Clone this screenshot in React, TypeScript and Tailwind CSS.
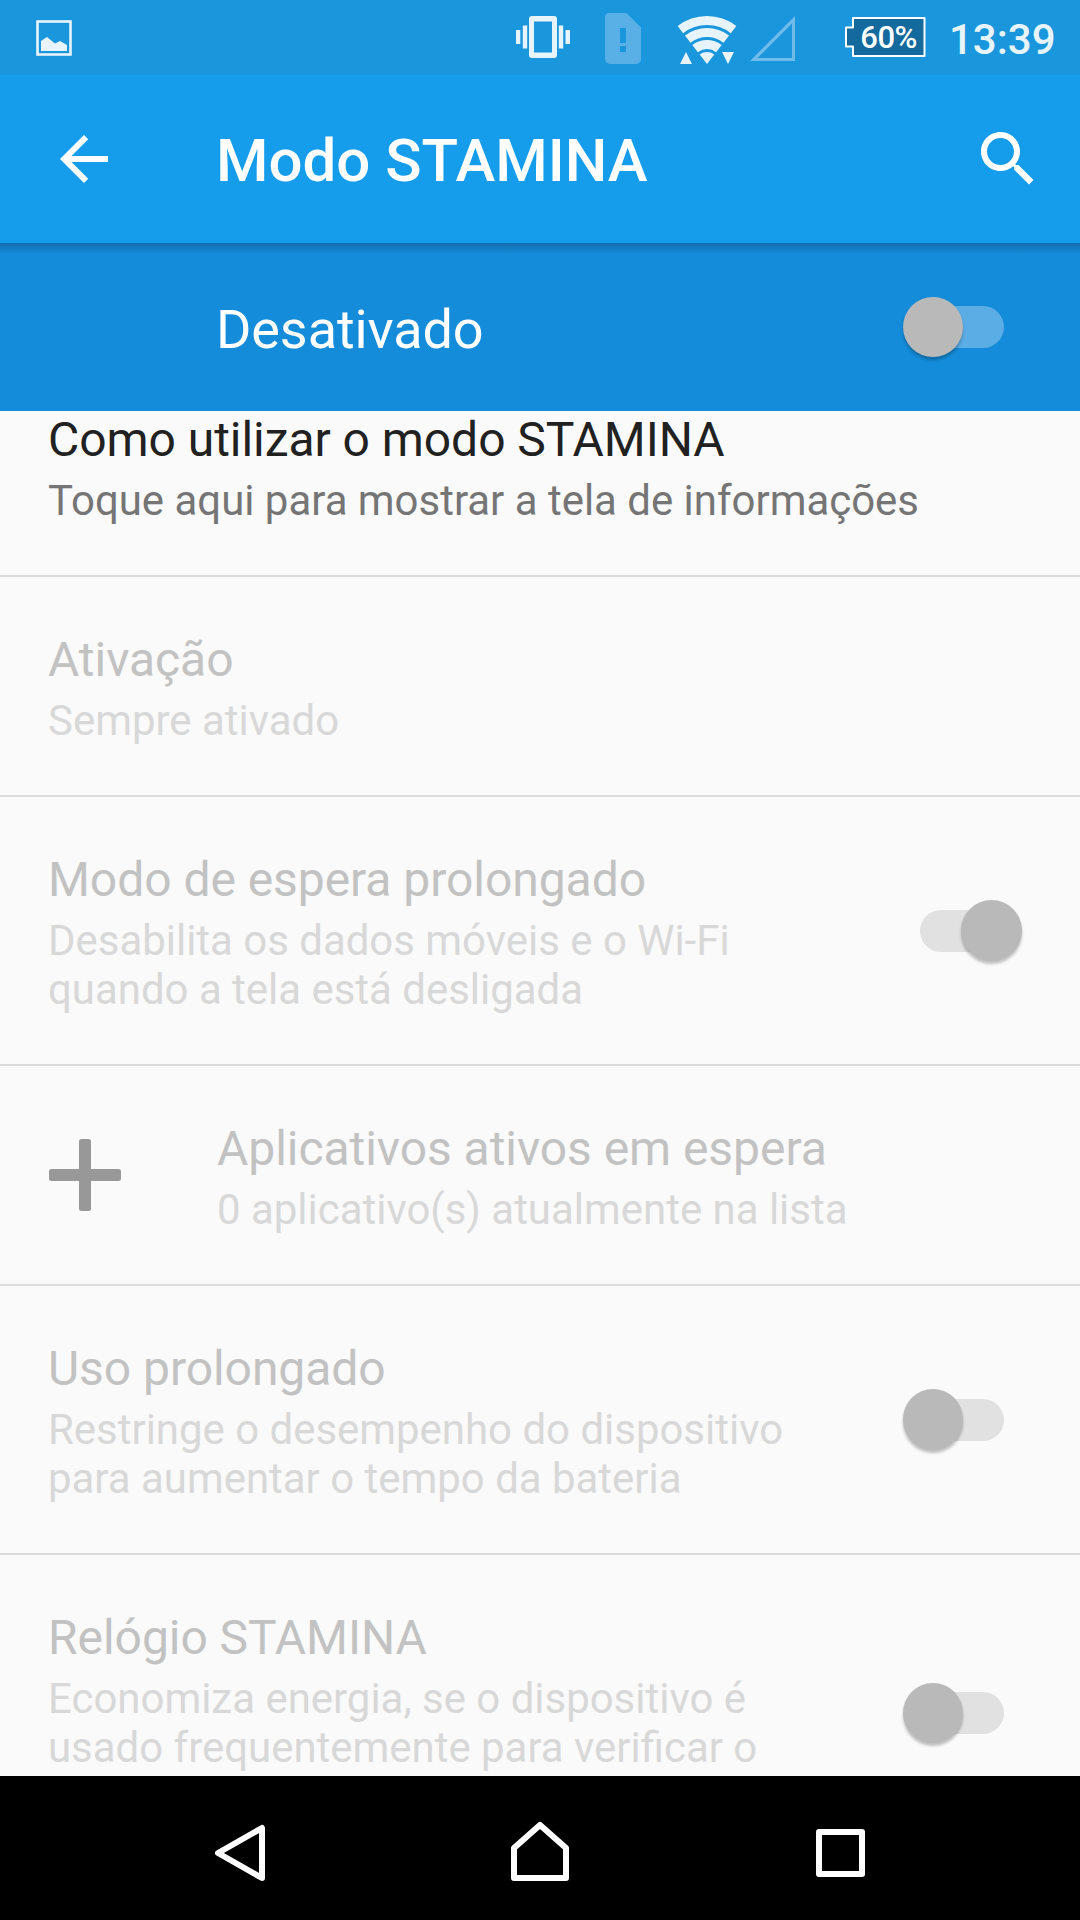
import React from 'react';

interface ToggleProps {
  on?: boolean;
  light?: boolean;
}

interface SettingRowProps {
  title: string;
  summary: string[];
  enabled?: boolean;
  icon?: React.ReactNode;
  toggle?: 'on' | 'off';
  tall?: boolean;
}

const Toggle: React.FC<ToggleProps> = ({ on, light }) => (
  <div className={`relative h-[42px] w-[84px] shrink-0 rounded-full ${light ? 'bg-[#5bade5]' : 'bg-[#e1e1e1]'}`}>
    <div
      className={`absolute -top-[9.5px] size-[60.5px] rounded-full bg-[#b9b9b9] shadow-[0_3px_3px_rgba(0,0,0,0.24)] ${
        on ? 'left-[41px]' : '-left-[17.5px]'
      }`}
    />
  </div>
);

const PlusIcon = () => (
  <svg className="size-[72px]" viewBox="0 0 72 72" fill="#989898">
    <rect x="30" width="12" height="72" rx="2.5" />
    <rect y="30" width="72" height="12" rx="2.5" />
  </svg>
);

const StatusBar = () => (
  <div className="flex h-[75px] items-start bg-[#1a96dc] text-[#e8f4fc]">
    <svg className="mt-5 ml-9 h-9 w-9" viewBox="0 0 36 36">
      <rect x="1.5" y="1.5" width="33" height="33" fill="none" stroke="currentColor" strokeWidth="2.6" />
      <path d="M5 31V21l6-4 8 6.5 5-2.5 7 4v6z" fill="currentColor" />
    </svg>
    {/* vibrate */}
    <svg className="mt-4 ml-[444px] h-[42px] w-[54px]" viewBox="0 0 54 42" fill="currentColor">
      <path d="M0 14h4.3v14H0zM6.8 9.6h4.4v23H6.8zM42.8 9.6h4.4v23h-4.4zM49.5 14H54v14h-4.5z" />
      <path fillRule="evenodd" d="M16 0h22a3 3 0 0 1 3 3v36a3 3 0 0 1-3 3H16a3 3 0 0 1-3-3V3a3 3 0 0 1 3-3zm2 5.6v30.8h18V5.6z" />
    </svg>
    {/* missing sim */}
    <svg className="mt-[13px] ml-[35px] h-[51px] w-9" viewBox="0 0 36 51" fill="#58b0e6">
      <path
        fillRule="evenodd"
        d="M4 0h17.5L36 14.5V46a5 5 0 0 1-5 5H5a5 5 0 0 1-5-5V4a4 4 0 0 1 4-4zm11 15v15h6V15zm0 18v6h6v-6z"
      />
    </svg>
    {/* wifi */}
    <svg className="mt-[15px] ml-9 h-[50px] w-[60px]" viewBox="0 0 60 50" fill="none" stroke="currentColor" strokeWidth="9">
      <path d="M3.4 14.6a43.5 43.5 0 0 1 53.2 0M10.7 24.1a31.5 31.5 0 0 1 38.6 0M18.1 33.6a19.5 19.5 0 0 1 23.8 0" />
      <path d="M30 49l-7.3-9.5a12 12 0 0 1 14.6 0zM3 49l6-12 6 12zM45 37h12l-6 12z" fill="currentColor" stroke="none" />
    </svg>
    <svg className="mt-4 ml-[13px] h-[45px] w-[45px]" viewBox="0 0 45 45" fill="#70bbe9">
      <path fillRule="evenodd" d="M0 45L45 0v45zM7.4 42H42V7.4z" />
    </svg>
    {/* battery */}
    <div className="relative mt-[17px] ml-[50px] h-10 w-[81px]">
      <svg className="size-full" viewBox="0 0 81 40">
        <path d="M8 1h71.5v38H8V29.5H1V10.5h7z" fill="#146a9d" stroke="#fff" strokeWidth="2" strokeLinejoin="round" />
      </svg>
      <span className="absolute top-px left-[7px] w-[73px] text-center text-[31px] leading-10 font-medium tracking-[-0.6px] text-white">
        60%
      </span>
    </div>
    <span className="mt-[15px] ml-[23px] text-[42px] leading-[49px] font-medium whitespace-nowrap">13:39</span>
  </div>
);

const Toolbar = () => (
  <header className="flex h-[168px] items-center bg-[#159dec] text-white">
    <svg className="-mt-[1px] ml-12 size-[72px]" viewBox="0 0 24 24" fill="currentColor">
      <path d="M20 11H7.83l5.59-5.59L12 4l-8 8 8 8 1.41-1.41L7.83 13H20v-2z" />
    </svg>
    <h1 className="mt-1 ml-24 flex-1 text-[60px] leading-[70px] font-medium">Modo STAMINA</h1>
    <svg className="-mt-[1px] mr-9 size-[72px]" viewBox="0 0 24 24" fill="currentColor">
      <path d="M15.5 14h-.79l-.28-.27C15.41 12.59 16 11.11 16 9.5 16 5.91 13.09 3 9.5 3S3 5.91 3 9.5 5.91 16 9.5 16c1.61 0 3.09-.59 4.23-1.57l.27.28v.79l5 4.99L20.49 19l-4.99-5zm-6 0C7.01 14 5 11.99 5 9.5S7.01 5 9.5 5 14 7.01 14 9.5 11.99 14 9.5 14z" />
    </svg>
  </header>
);

const SettingRow: React.FC<SettingRowProps> = ({ title, summary, enabled, icon, toggle, tall }) => (
  <div
    className={`flex shrink-0 items-center border-b-2 border-[#dcdcdc] pr-[76px] pl-12 ${tall ? 'h-[318px]' : ''}`}
  >
    {icon && <div className="mr-24 ml-px">{icon}</div>}
    <div className="flex-1 self-start pt-[55px] pb-[50px] whitespace-nowrap">
      <h2 className={`text-[48px] leading-[56px] tracking-[-0.05px] ${enabled ? 'text-[#212121]' : 'text-[#c2c2c2]'}`}>
        {title}
      </h2>
      <p className={`mt-2 text-[41.95px] leading-[49px] ${enabled ? 'text-[#757575]' : 'text-[#d8d8d8]'}`}>
        {summary.map((line) => (
          <span key={line} className="block">
            {line}
          </span>
        ))}
      </p>
    </div>
    {toggle && <Toggle on={toggle === 'on'} />}
  </div>
);

const NavBar = () => (
  <nav className="flex h-36 shrink-0 items-start bg-black">
    <svg className="mt-12 ml-[214px] h-[60px] w-[52px]" viewBox="0 0 52 60" fill="none" stroke="#fff" strokeWidth="6" strokeLinejoin="round">
      <path d="M4 29L48 4v50z" />
    </svg>
    <svg className="mt-[45px] ml-[244px] h-[62px] w-[60px]" viewBox="0 0 60 62" fill="none" stroke="#fff" strokeWidth="6" strokeLinejoin="round">
      <path d="M4 27L30 4l26 23v30H4z" />
    </svg>
    <svg className="mt-[53px] ml-[246px] h-[48px] w-[49px]" viewBox="0 0 49 48" fill="none" stroke="#fff" strokeWidth="6" strokeLinejoin="round">
      <path d="M3 3h43v42H3z" />
    </svg>
  </nav>
);

const settings: SettingRowProps[] = [
  {
    title: 'Como utilizar o modo STAMINA',
    summary: ['Toque aqui para mostrar a tela de informações'],
    enabled: true,
  },
  { title: 'Ativação', summary: ['Sempre ativado'] },
  {
    title: 'Modo de espera prolongado',
    summary: ['Desabilita os dados móveis e o Wi-Fi', 'quando a tela está desligada'],
    toggle: 'on',
  },
  {
    title: 'Aplicativos ativos em espera',
    summary: ['0 aplicativo(s) atualmente na lista'],
    icon: <PlusIcon />,
  },
  {
    title: 'Uso prolongado',
    summary: ['Restringe o desempenho do dispositivo', 'para aumentar o tempo da bateria'],
    toggle: 'off',
  },
  {
    title: 'Relógio STAMINA',
    summary: ['Economiza energia, se o dispositivo é', 'usado frequentemente para verificar o'],
    toggle: 'off',
    tall: true,
  },
];

export default function App() {
  return (
    <div className="flex h-[1920px] w-[1080px] flex-col overflow-hidden bg-[#fafafa] font-['Roboto',sans-serif]">
      <StatusBar />
      <Toolbar />
      <div className="relative flex h-[168px] shrink-0 items-center justify-between bg-[#148cda] pr-[76px] pl-[216px]">
        <div className="absolute inset-x-0 top-0 h-[11px] bg-linear-to-b from-[#106eac] to-[#148cda]" />
        <span className="mt-[5px] text-[54px] leading-[63px] tracking-[-0.1px] text-white">Desativado</span>
        <Toggle light />
      </div>
      <main className="min-h-0 flex-1 overflow-hidden">
        {/* list is scrolled slightly under the switch bar */}
        <div className="-mt-[54px] flex flex-col">
          {settings.map((item) => (
            <SettingRow key={item.title} {...item} />
          ))}
        </div>
      </main>
      <NavBar />
    </div>
  );
}
